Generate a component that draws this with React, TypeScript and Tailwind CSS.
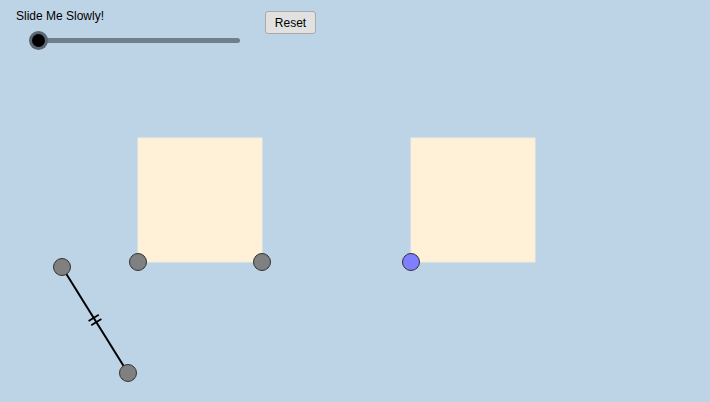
export default function App() {
  // segment endpoints and the double tick in the middle
  const a = { x: 62, y: 267 };
  const b = { x: 128, y: 373 };
  const mx = (a.x + b.x) / 2;
  const my = (a.y + b.y) / 2;
  const len = Math.hypot(b.x - a.x, b.y - a.y);
  const ux = (b.x - a.x) / len;
  const uy = (b.y - a.y) / len;
  const px = -uy;
  const py = ux;
  const ticks = [-2.5, 2.5].map((o) => ({
    x1: mx + ux * o - px * 6,
    y1: my + uy * o - py * 6,
    x2: mx + ux * o + px * 6,
    y2: my + uy * o + py * 6,
  }));

  return (
    <div
      className="relative w-[710px] h-[402px] overflow-hidden bg-[#bdd4e7]"
      style={{ fontFamily: '"Liberation Sans", Arial, sans-serif' }}
    >
      {/* geometry canvas */}
      <svg className="absolute inset-0" width={710} height={402}>
        <rect x={138} y={138} width={124} height={124} fill="#fff0d8" stroke="#f3ecdf" strokeWidth={1} />
        <rect x={411} y={138} width={124} height={124} fill="#fff0d8" stroke="#f3ecdf" strokeWidth={1} />
        <line x1={a.x} y1={a.y} x2={b.x} y2={b.y} stroke="#000" strokeWidth={2} />
        {ticks.map((t, i) => (
          <line key={i} {...t} stroke="#000" strokeWidth={1.8} />
        ))}
        {[
          [62, 267],
          [128, 373],
          [138, 262],
          [262, 262],
        ].map(([x, y], i) => (
          <circle key={i} cx={x} cy={y} r={8.5} fill="#808080" stroke="#333" strokeWidth={1} />
        ))}
        <circle cx={411} cy={262} r={8.5} fill="#7f7fff" stroke="#333" strokeWidth={1} />
      </svg>

      {/* controls */}
      <div className="relative flex items-start pl-[16px] pt-[8px]">
        <div className="w-[249px]">
          <div className="text-[12px] leading-[16px] text-black">Slide Me Slowly!</div>
          <div className="relative ml-[22px] mt-[14px] h-[5px] w-[202px] rounded-full bg-[#717f8a]">
            <div className="absolute -left-[9px] -top-[7px] flex h-[19px] w-[19px] items-center justify-center rounded-full bg-[#5b6670]">
              <div className="h-[13px] w-[13px] rounded-full bg-black" />
            </div>
          </div>
        </div>
        <button className="mt-[3px] h-[23px] w-[51px] rounded-[3px] border border-[#a9a9a9] bg-[#e1e1e1] text-[12px] text-black">
          Reset
        </button>
      </div>
    </div>
  );
}
